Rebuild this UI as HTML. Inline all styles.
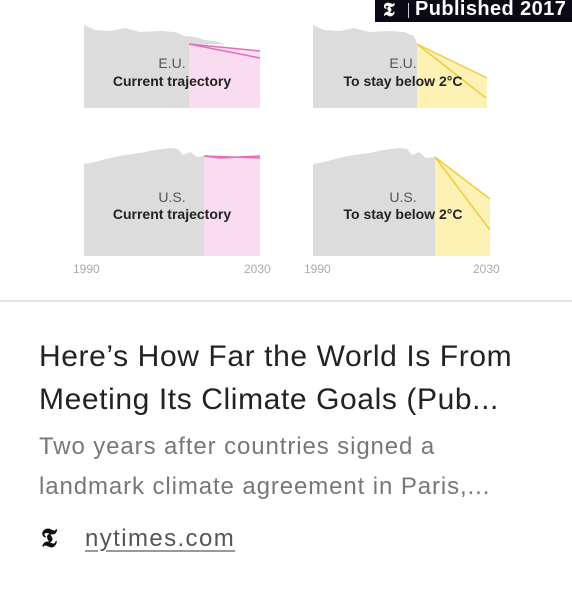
<!DOCTYPE html>
<html><head><meta charset="utf-8"><style>
body{margin:0;width:572px;height:597px;background:#fff;position:relative;overflow:hidden;font-family:"Liberation Sans",Arial,sans-serif}
.badge{position:absolute;left:375px;top:0;width:197px;height:22px;background:#0a0a16;color:#fff;font-weight:bold;font-size:20px;line-height:19px}
.badge .l{position:absolute;left:8px;top:1px;font-family:"Liberation Serif",serif;font-size:19px}
.badge .s{position:absolute;left:33px;top:3px;width:1px;height:15px;background:#ccc}
.badge .t{position:absolute;left:40px;top:0;letter-spacing:0.4px}
.hr{position:absolute;left:0;top:300px;width:572px;height:2px;background:#e6e6e6}
.title{position:absolute;left:39px;top:335px;font-size:30px;line-height:43px;color:#222;width:540px;letter-spacing:0.6px;white-space:nowrap}
.desc{position:absolute;left:39px;top:427px;font-size:24px;line-height:40px;color:#777;width:530px;letter-spacing:0.9px;white-space:nowrap}
.src{position:absolute;left:85px;top:525px;font-size:24px;color:#555;letter-spacing:1.4px;text-decoration:underline;text-decoration-color:#999;text-underline-offset:4px}
.logo{position:absolute;left:41px;top:524px;font-family:"Liberation Serif",serif;font-weight:bold;font-size:26px;color:#111}
</style></head><body>
<svg width="572" height="300" style="position:absolute;left:0;top:0" font-family="Liberation Sans, Arial, sans-serif">
<path d="M84 25 L95 30 L110 31 L125 28 L140 32 L160 31 L175 32 L185 36 L195 37 L205 40 L215 41 L225 44 L189 44 L189 108 L84 108 Z" fill="#dcdcdc"/>
<path d="M189 44 L260 50 L260 108 L189 108 Z" fill="#f9dcef"/>
<path d="M189 44 L260 51 M189 44 L260 58" stroke="#e070b8" stroke-width="1.5" fill="none"/>
<text x="172" y="68" font-size="14" fill="#555" text-anchor="middle">E.U.</text>
<text x="172" y="86" font-size="14" font-weight="bold" fill="#222" text-anchor="middle">Current trajectory</text>
<path d="M313 25 L324 30 L339 31 L354 28 L369 32 L389 31 L404 32 L414 36 L417 44 L417 108 L313 108 Z" fill="#dcdcdc"/>
<path d="M417 44 L487 78 L487 108 L417 108 Z" fill="#fdf1b4"/>
<path d="M417 44 L487 78 M417 44 L486 98" stroke="#f0cc40" stroke-width="1.5" fill="none"/>
<text x="403" y="68" font-size="14" fill="#555" text-anchor="middle">E.U.</text>
<text x="403" y="86" font-size="14" font-weight="bold" fill="#222" text-anchor="middle">To stay below 2°C</text>
<path d="M84 164 L95 162 L110 158 L125 155 L140 153 L155 150 L170 148 L178 149 L183 155 L190 152 L197 157 L204 156 L204 256 L84 256 Z" fill="#dcdcdc"/>
<path d="M204 156 L220 158 L240 157 L260 156 L260 256 L204 256 Z" fill="#f9dcef"/>
<path d="M204 156 L220 158 L240 157 L260 156 M204 156 L260 158" stroke="#e070b8" stroke-width="1.5" fill="none"/>
<text x="172" y="202" font-size="14" fill="#555" text-anchor="middle">U.S.</text>
<text x="172" y="219" font-size="14" font-weight="bold" fill="#222" text-anchor="middle">Current trajectory</text>
<path d="M313 164 L324 162 L339 158 L354 155 L369 153 L384 150 L399 148 L407 149 L412 155 L419 152 L426 158 L435 157 L435 256 L313 256 Z" fill="#dcdcdc"/>
<path d="M435 157 L490 199 L490 256 L435 256 Z" fill="#fdf1b4"/>
<path d="M435 157 L490 199 M435 157 L490 230" stroke="#f0cc40" stroke-width="1.5" fill="none"/>
<text x="403" y="202" font-size="14" fill="#555" text-anchor="middle">U.S.</text>
<text x="403" y="219" font-size="14" font-weight="bold" fill="#222" text-anchor="middle">To stay below 2°C</text>
<g font-size="12" fill="#aaa">
<text x="73" y="273">1990</text><text x="244" y="273">2030</text>
<text x="304" y="273">1990</text><text x="473" y="273">2030</text>
</g>
</svg>
<div class="badge"><span class="l">𝕿</span><span class="s"></span><span class="t">Published 2017</span></div>
<div class="hr"></div>
<div class="title">Here’s How Far the World Is From<br>Meeting Its Climate Goals (Pub...</div>
<div class="desc">Two years after countries signed a<br>landmark climate agreement in Paris,...</div>
<div class="logo">𝕿</div>
<div class="src">nytimes.com</div>
</body></html>
